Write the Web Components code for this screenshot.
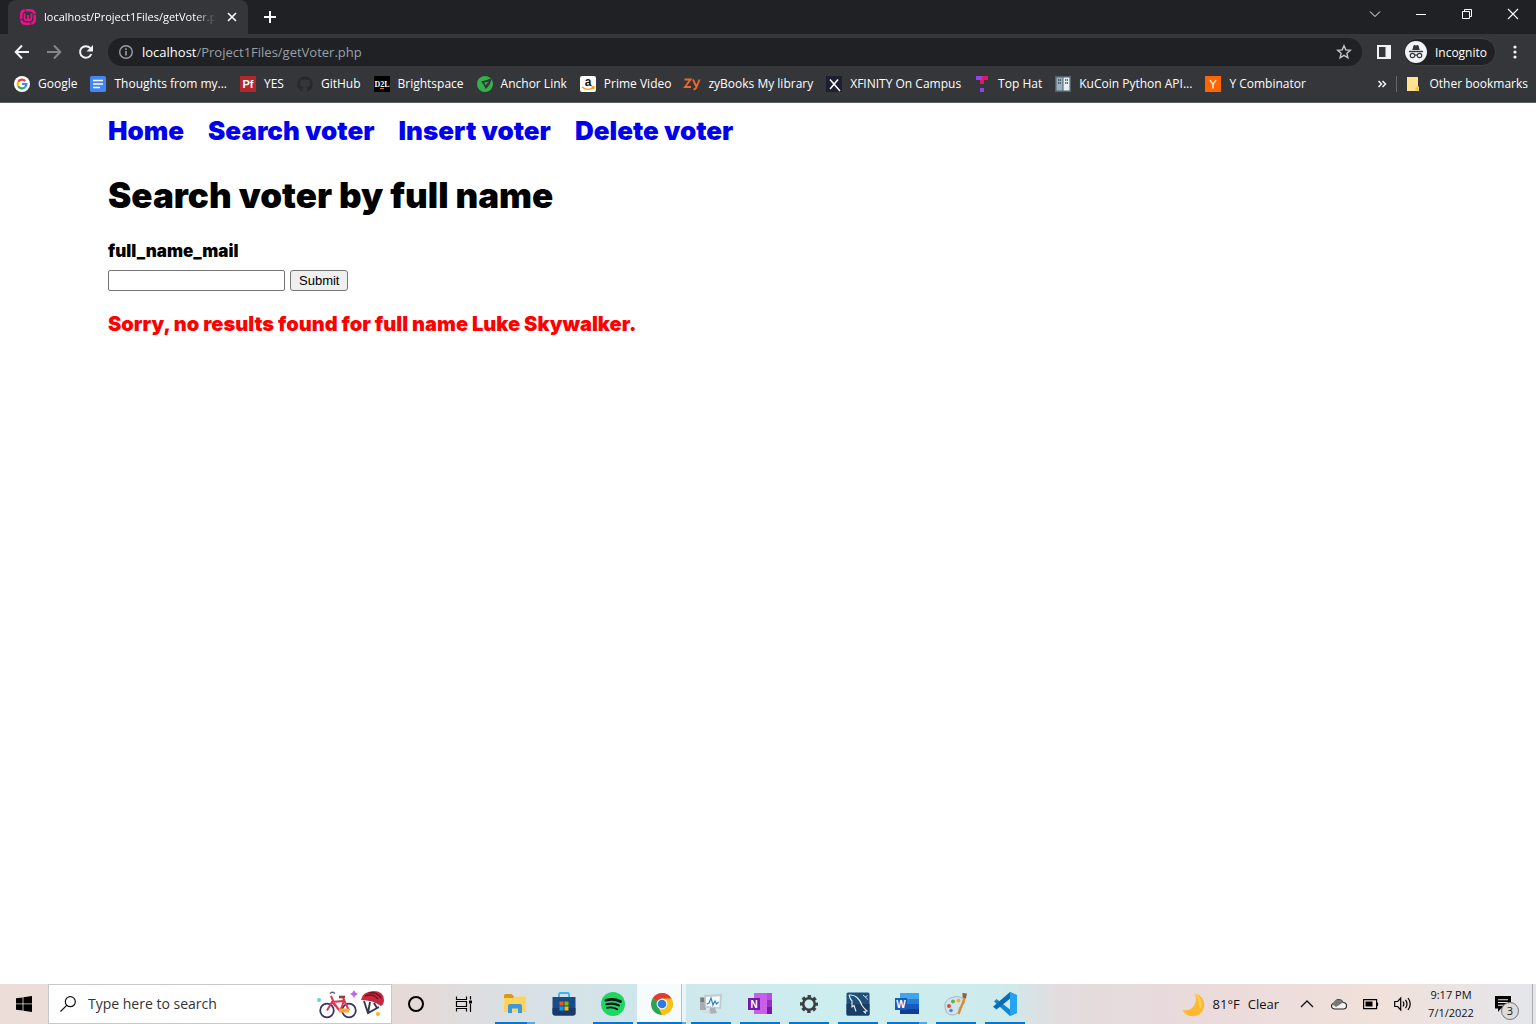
<!DOCTYPE html>
<html lang="en">
<head>
<meta charset="utf-8">
<title>localhost/Project1Files/getVoter.php</title>
<style>
  html, body { height: 100%; margin: 0; }
  body { font-family: "Open Sans", "Noto Sans", sans-serif; font-size: 12px; background: #fff; }
</style>
</head>
<body>
<browser-window>
  <tab-strip slot="tabs"></tab-strip>
  <tool-bar slot="toolbar"></tool-bar>
  <bookmarks-bar slot="bookmarks">
    <bookmark-link icon="google">Google</bookmark-link>
    <bookmark-link icon="docs">Thoughts from my...</bookmark-link>
    <bookmark-link icon="pf">YES</bookmark-link>
    <bookmark-link icon="github">GitHub</bookmark-link>
    <bookmark-link icon="d2l">Brightspace</bookmark-link>
    <bookmark-link icon="anchor">Anchor Link</bookmark-link>
    <bookmark-link icon="amazon">Prime Video</bookmark-link>
    <bookmark-link icon="zy">zyBooks My library</bookmark-link>
    <bookmark-link icon="xfinity">XFINITY On Campus</bookmark-link>
    <bookmark-link icon="tophat">Top Hat</bookmark-link>
    <bookmark-link icon="kucoin">KuCoin Python API...</bookmark-link>
    <bookmark-link icon="ycomb">Y Combinator</bookmark-link>
    <bookmark-link icon="folder" slot="end">Other bookmarks</bookmark-link>
  </bookmarks-bar>
  <voter-search-page></voter-search-page>
  <task-bar slot="taskbar">
    <task-app icon="explorer" label="File Explorer" state="stacked"></task-app>
    <task-app icon="store" label="Microsoft Store"></task-app>
    <task-app icon="spotify" label="Spotify" state="open"></task-app>
    <task-app icon="chrome" label="Google Chrome" state="active"></task-app>
    <task-app icon="monitor" label="Resource Monitor" state="open"></task-app>
    <task-app icon="onenote" label="OneNote" state="open"></task-app>
    <task-app icon="gear" label="Settings" state="open"></task-app>
    <task-app icon="mysql" label="MySQL Workbench" state="open"></task-app>
    <task-app icon="word" label="Word" state="stacked"></task-app>
    <task-app icon="paint" label="Paint" state="open"></task-app>
    <task-app icon="vscode" label="Visual Studio Code" state="open"></task-app>
  </task-bar>
</browser-window>

<script>
const LETTER = 'text-anchor="middle" font-weight="700"';
const ICONS = {
  wamp: [16, '<rect x="1.200" y="1.200" width="13.600" height="13.600" rx="4.500" fill="none" stroke="#f0108f" stroke-width="2.400" stroke-dasharray="10.500 1"/><path d="M4.500 4.500v4q0 2.800 1.800 2.800 1.700 0 1.700-2V6v3.300q0 2 1.700 2 1.800 0 1.800-2.800v-4" fill="none" stroke="#f0108f" stroke-width="1.800"/>'],
  close: [16, '<path d="M4 4l8 8M12 4l-8 8" stroke="#fff" stroke-width="1.600"/>'],
  plus: [16, '<path d="M8 2v12M2 8h12" stroke="#fff" stroke-width="2"/>'],
  chevdown: [16, '<path d="M3 5.500l5 5 5-5" fill="none" stroke="#fff"/>'],
  minimize: [16, '<path d="M3 8.500h10" stroke="#fff"/>'],
  restore: [16, '<path d="M3.500 5.500h7v7h-7zM5.500 5.500v-2h7v7h-2" fill="none" stroke="#fff"/>'],
  winclose: [16, '<path d="M3 3l10 10M13 3L3 13" stroke="#fff" stroke-width="1.100"/>'],
  back: [16, '<path d="M15 8H2M8 1.500L1.700 8 8 14.500" fill="none" stroke="#f1f3f4" stroke-width="2"/>'],
  forward: [16, '<path d="M1 8h13M8 1.500L14.300 8 8 14.500" fill="none" stroke="#85868a" stroke-width="2"/>'],
  reload: [16, '<path d="M13.300 10A5.800 5.800 0 1 1 12.300 4.200" fill="none" stroke="#f1f3f4" stroke-width="2"/><path d="M15 1v6.500H8.500z" fill="#f1f3f4"/>'],
  info: [16, '<circle cx="8" cy="8" r="6.300" fill="none" stroke="#9aa0a6" stroke-width="1.400"/><path d="M8 7v4.500M8 4.300v1.700" stroke="#9aa0a6" stroke-width="1.600"/>'],
  star: [16, '<path d="M8 1.700l1.800 4.200 4.500.4-3.400 3 1 4.500L8 11.400l-3.900 2.400 1-4.500-3.400-3 4.500-.4z" fill="none" stroke="#c4c7c9" stroke-width="1.400"/>'],
  panel: [16, '<path d="M1 1h14v14H1zM3 3v10h6.500V3z" fill="#f1f3f4" fill-rule="evenodd"/>'],
  incognito: [22, '<circle cx="11" cy="11" r="11" fill="#f1f3f4"/><path d="M7.300 9l1.200-4.600q1.200-.7 2.500 0 1.300-.7 2.500 0L14.700 9z" fill="#35363a"/><path d="M4 10.500h14" stroke="#35363a" stroke-width="1.400"/><g fill="none" stroke="#35363a" stroke-width="1.200"><circle cx="7.500" cy="14.500" r="2.200"/><circle cx="14.500" cy="14.500" r="2.200"/><path d="M9.700 14.300q1.300-.8 2.600 0"/></g>'],
  dots: [16, '<g fill="#f1f3f4"><circle cx="8" cy="3" r="1.600"/><circle cx="8" cy="8" r="1.600"/><circle cx="8" cy="13" r="1.600"/></g>'],
  more: [16, '<path d="M4.500 5l3 3-3 3M8.500 5l3 3-3 3" fill="none" stroke="#f1f3f4" stroke-width="1.500"/>'],
  google: [16, '<circle cx="8" cy="8" r="8" fill="#fff"/><g fill="none" stroke-width="2.200"><path d="M4.200 5.800A4.400 4.400 0 0 1 11.200 4.900" stroke="#ea4335"/><path d="M4.200 10.200a4.400 4.400 0 0 1 0-4.400" stroke="#fbbc05"/><path d="M11 11.200A4.400 4.400 0 0 1 4.200 10.200" stroke="#34a853"/><path d="M8 8h4.400a4.400 4.400 0 0 1-1.400 3.200" stroke="#4285f4"/></g>'],
  docs: [16, '<rect width="16" height="16" rx="1.500" fill="#4285f4"/><path d="M3 4.500h10M3 8h10M3 11.500h7" stroke="#fff" stroke-width="1.600"/>'],
  pf: [16, `<rect width="16" height="16" fill="#b3282d"/><text x="8" y="12" font-size="11" fill="#fff" ${LETTER}>Pf</text>`],
  github: [16, '<path d="M8 .2a8 8 0 0 0-2.500 15.500c.4 0 .5-.2.500-.4v-1.500c-2.200.5-2.700-1-2.700-1-.4-.9-.9-1.200-.9-1.200-.7-.5.100-.5.100-.5.800.1 1.200.8 1.200.8.700 1.300 1.900.9 2.400.7 0-.5.300-.9.500-1.100-1.800-.2-3.600-.9-3.600-4 0-.9.300-1.600.8-2.100-.1-.2-.4-1 .1-2.100 0 0 .7-.2 2.200.8a7.600 7.600 0 0 1 4 0c1.500-1 2.200-.8 2.200-.8.400 1.100.2 1.900.1 2.100.5.600.8 1.300.8 2.100 0 3.100-1.900 3.800-3.700 4 .3.200.6.700.6 1.500v2.200c0 .2.100.5.600.4A8 8 0 0 0 8 .2z" fill="#24292e"/>'],
  d2l: [16, `<rect width="16" height="16" fill="#000"/><text x="8" y="11" font-family="Liberation Serif, serif" font-size="8" fill="#fff" ${LETTER}>D2L</text><path d="M6 12.500h4" stroke="#e87511"/>`],
  anchor: [16, '<circle cx="8" cy="8" r="8" fill="#34b24a"/><path d="M4 5.500Q9 5 14.500 2 14 9 8.500 13 7.500 9 4 5.500z" fill="#35363a"/><path d="M7.200 6.600l1.400 2.600L12 5.400q-2.500 1-4.800 1.200z" fill="#34b24a"/>'],
  amazon: [16, `<rect width="16" height="16" rx="2" fill="#fff"/><text x="8" y="10" font-size="12" fill="#111" ${LETTER}>a</text><path d="M2 11q6 4.500 11.500.5M11.500 11l2.500-.3-.6 2.500" fill="none" stroke="#f90" stroke-width="1.300"/>`],
  zy: [16, '<path d="M.5 3.500h6l-5.500 7.500h6M9 3.500l3 6.500M15.500 3.500l-3.500 8.500q-.7 1.500-2.500 1.200" fill="none" stroke="#e8692c" stroke-width="1.900"/>'],
  xfinity: [16, '<rect width="16" height="16" fill="#1b1f2e"/><path d="M4 3.500l10 11.500M12 3.500l-8 9.500" stroke="#fff" stroke-width="1.500"/>'],
  tophat: [16, '<path d="M2 0h6v4H2z" fill="#8f44f0"/><path d="M8 0h6v4H8z" fill="#e0186c"/><path d="M6 4h4v4H6z" fill="#e0186c"/><path d="M6 12h4v4H6z" fill="#8f44f0"/>'],
  kucoin: [16, '<path d="M0 0h16v16H0z" fill="#4f6270"/><path d="M1.500 1.500h6v13h-6z" fill="#9bb0bd"/><path d="M8.500 1.500h6v13h-6z" fill="#e8eef2"/><path d="M3 4h3M3 7h3M10 4h3M10 7h3" stroke="#3a4953" stroke-width="1.500" stroke-dasharray="1.200 .6"/>'],
  ycomb: [16, '<path d="M0 0h16v16H0z" fill="#f60"/><path d="M5 4l3 4.500L11 4M8 8v4.500" fill="none" stroke="#fff" stroke-width="1.300"/>'],
  folder: [16, '<path d="M2 1h11v9.500h1V15H2z" fill="#ffe391"/><path d="M10.500 15v-3l2.500-2v1.500h1V15z" fill="#f3c83c"/>'],
  windows: [16, '<path d="M0 2.300L6.600 1.400v6.100H0zM7.400 1.300L16 0v7.500H7.400zM0 8.300h6.600v6.300L0 13.700zM7.400 8.300H16V16l-8.600-1.300z" fill="#000"/>'],
  search: [16, '<circle cx="10.300" cy="5.700" r="5" fill="none" stroke="#111" stroke-width="1.200"/><path d="M6.700 9.300L.5 15.500" stroke="#111" stroke-width="1.200"/>'],
  cortana: [16, '<circle cx="8" cy="8" r="7" fill="none" stroke="#000" stroke-width="2"/>'],
  taskview: [16, '<path d="M.5.500v3h10v-3M.5 15.500v-3h10v3M.5 5.500h10v5H.5zM14.500 0v3.500M14.500 8v8" fill="none" stroke="#000" stroke-width="1.200"/><path d="M13 4.500h3v3h-3z"/>'],
  explorer: [24, '<path d="M1 3.500q0-1.500 1.500-1.500h6L11 4.500V9H1z" fill="#d99a1c"/><path d="M1 6h9l2-1.500h10q1 0 1 1V20H1z" fill="#ffd35c"/><path d="M5 21v-7q0-2 2-2h10q2 0 2 2v7h-4v-4.500H9V21z" fill="#3b98d9"/>'],
  store: [24, '<path d="M7 6V2.500Q7 1 8.500 1h7Q17 1 17 2.500V6" fill="none" stroke="#36b5ee" stroke-width="1.800"/><path d="M.5 5h23v16q0 2.500-2.500 2.500H3Q.5 23.500.5 21z" fill="#1a4b86"/><path d="M.5 16h23v5q0 2.500-2.500 2.500H3Q.5 23.500.5 21z" fill="#183a6b"/><path d="M7.500 9.500h4v4h-4z" fill="#f25022"/><path d="M12.500 9.500h4v4h-4z" fill="#7fba00"/><path d="M7.500 14.500h4v4h-4z" fill="#00a4ef"/><path d="M12.500 14.500h4v4h-4z" fill="#ffb900"/>'],
  spotify: [24, '<circle cx="12" cy="12" r="12" fill="#1ed760"/><g fill="none" stroke="#10131a" stroke-linecap="round"><path d="M4.800 8.200q8-2.200 14.700 1.300" stroke-width="2.700"/><path d="M5.500 12.200q7-1.800 12.500 1.200" stroke-width="2.200"/><path d="M6 15.800q5.500-1.200 10.300 1.400" stroke-width="1.800"/></g>'],
  chrome: [24, '<path d="M12 12L2.500 6.500A11 11 0 0 1 21.600 6.500z" fill="#e33b2e"/><path d="M12 12L2.500 6.500A11 11 0 0 0 12 23z" fill="#2da44e"/><path d="M12 12h-1l1 11A11 11 0 0 0 21.600 6.500H12z" fill="#fbc116"/><path d="M2.500 6.500L7.300 14.500 12 12z" fill="#2da44e"/><path d="M16.700 14.500L12 23l-3-6z" fill="#fbc116"/><circle cx="12" cy="12" r="5.400" fill="#fff"/><circle cx="12" cy="12" r="4.300" fill="#2f78ec"/>'],
  monitor: [24, '<path d="M1 5h6v13H1z" fill="#a5adb3"/><path d="M1.500 7h4M1.500 9h4" stroke="#3f4b52"/><path d="M5 3l18-1-1 15-16-1.500z" fill="#c4cbd0"/><path d="M7 5l14-.8-.8 11L7.500 14z" fill="#f5fbff"/><path d="M8 12l2-1 2-5 2 7 2-4 1.500 3 2-2" fill="none" stroke="#2b83c6" stroke-width="1.200"/><path d="M11 16h5l2 5-8 1z" fill="#aab2b8"/><path d="M3 18l8 1 1 3-9-2z" fill="#d5dade"/>'],
  onenote: [24, `<path d="M6 1h18v21H6z" fill="#c95fe8"/><path d="M19 1h5v7h-5z" fill="#b54fdf"/><path d="M19 8h5v7h-5z" fill="#9332bf"/><path d="M19 15h5v7h-5z" fill="#7719aa"/><path d="M0 6h12v12H0z" fill="#7719aa"/><text x="6" y="15.500" font-size="10" fill="#fff" ${LETTER}>N</text>`],
  gear: [24, '<circle cx="12" cy="12" r="5.800" fill="none" stroke="#3a3f42" stroke-width="2.600"/><circle cx="12" cy="12" r="7.500" fill="none" stroke="#3a3f42" stroke-width="3" stroke-dasharray="3.300 2.590" stroke-dashoffset="1.650"/>'],
  mysql: [24, '<rect x=".5" y=".5" width="23" height="23" rx="1.500" fill="#1f4f7c"/><path d="M.5 12h23v10q0 1.500-1.500 1.500H2Q.5 23.500.5 22z" fill="#1a3e63"/><path d="M3 3q5-.5 8 2.500 3.500 3 5 8 2 3 5 5.500l-3 .5 2 2M3 3q1 4 3 6v6l2-1.500 2 6" fill="none" stroke="#e6f0f7" stroke-width="1.100"/><path d="M17 3l5 4.500M19 5.500l2.500-2" stroke="#cfdde8"/>'],
  word: [24, `<path d="M5 1h19v6H5z" fill="#41a5ee"/><path d="M5 7h19v5H5z" fill="#2b7cd3"/><path d="M5 12h19v5H5z" fill="#185abd"/><path d="M5 17h19v5H5z" fill="#103f91"/><path d="M0 6h12v12H0z" fill="#185abd"/><text x="6" y="15.500" font-size="10" fill="#fff" ${LETTER}>W</text>`],
  paint: [24, '<path d="M1 15Q0 8 8 5.500q9-2.500 12 2.500 2 4-3 6-2.500 1-2 4-1 5-7 5T1 15z" fill="#d4e4ee" stroke="#8fa9ba" stroke-width=".8"/><circle cx="5" cy="14" r="2" fill="#e04a33"/><circle cx="9" cy="9.500" r="2" fill="#59b24b"/><circle cx="14.500" cy="8.500" r="2" fill="#f0b429"/><circle cx="7" cy="18.500" r="1.800" fill="#3d8fd6"/><path d="M21 5l-6.500 17" stroke="#d98a2b" stroke-width="2.200"/><path d="M18.500 1l4.500.5-1 5-3.500-1z" fill="#94603a"/>'],
  vscode: [24, '<path d="M17 0l6.500 3v18L17 24 1 9.500 3.500 7 17 17.500z" fill="#1187d4"/><path d="M17 0L0 14.700 3.500 17.500 17 6.800z" fill="#0a6cb8"/><path d="M17 0l7 3v18l-7 3z" fill="#25a4ee"/>'],
  moon: [24, '<path d="M13.500 1.500A11.500 11.500 0 1 1 1.500 18Q10 19.500 13.500 13q3-6 0-11.500z" fill="#ffb92e"/><path d="M13.500 1.500a11.500 11.500 0 0 1 5 17Q19 8 13.500 1.500z" fill="#ffd35a"/>'],
  chevup: [16, '<path d="M2 11l6-6 6 6" fill="none" stroke="#111" stroke-width="1.300"/>'],
  cloud: [16, '<path d="M3.500 13q-3-.5-3-3t3-3Q5 3 8.500 3.500q2.500.3 3.500 3 3.500 0 3.500 3.200T12.500 13z" fill="#f6f2f0" stroke="#222" stroke-width="1.100"/><path d="M1.500 8.500Q3 3.500 8 3.500q3 0 4 3L5 11z" fill="#777"/>'],
  battery: [16, '<path d="M.6 3.600h13v9H.6zM14.500 6.500v3.500" fill="none" stroke="#000" stroke-width="1.200"/><path d="M2.500 5.500h7v5h-7z"/>'],
  speaker: [18, '<path d="M.7 6.500h3l3-3.500v12l-3-3.500h-3zM9 6.500q1.800 2.500 0 5M11.500 4.800q3 4.200 0 8.400M14 3q4.500 6 0 12" fill="none" stroke="#000" stroke-width="1.200"/>'],
  bubble: [16, '<path d="M0 0h16v12.500H6L3 16v-3.500H0z"/><path d="M3 3.700h10M3 6.500h10M3 9.300h7" stroke="#ebe4e2" stroke-width="1.100"/>'],
  cycling: [70, '<g fill="none"><circle cx="10" cy="20.500" r="6.800" stroke="#38336b" stroke-width="1.800"/><circle cx="32" cy="20.500" r="6.800" stroke="#38336b" stroke-width="1.800"/><path d="M10 20.500l5-8.500 12-1-4 10-8-9M14 6l3 7 6 8M26 8l6 12.500" stroke="#e0344f" stroke-width="2"/><path d="M22 20.500h10" stroke="#fba92e" stroke-width="4"/><path d="M18 3.500q-3-2.500-5 0" stroke="#5f6a80" stroke-width="1.600"/><path d="M22 7h6" stroke="#8a4634" stroke-width="2.600"/></g><circle cx="2" cy="10" r="2" fill="#61d3e3"/><path d="M37 0l1.400 2.600L41 4l-2.600 1.400L37 8l-1.400-2.600L33 4l2.600-1.400z" fill="#c164ee"/><path d="M44 10q1-8 12-9 11 0 11 9 0 4-3 6-8-6-20-6z" fill="#c8283f"/><path d="M48 6q8-3 13 3M52 3q8-1 12 5" stroke="#6d1325" stroke-width="1.500" fill="none"/><path d="M47 11l4 12 11-6M53 12l-2 11M57 13l3 5" stroke="#333a4e" stroke-width="1.900" fill="none"/><circle cx="61" cy="24" r="2" fill="#fbb120"/>', 28],
};

const define = (name, html, setup) => {
  const template = document.createElement('template');
  template.innerHTML = html;
  customElements.define(name, class extends HTMLElement {
    constructor() {
      super();
      this.attachShadow({ mode: 'open' }).append(template.content.cloneNode(true));
    }
    connectedCallback() { if (setup) setup(this, this.shadowRoot); }
  });
};

/* An inline drawing picked by name; its box takes the size of the drawing. */
define('ui-icon', '<style>:host{display:inline-flex;flex:none}svg{display:block;overflow:visible;font-family:"Liberation Sans",sans-serif}</style><span></span>', (el, root) => {
  const [w, body, h = w] = ICONS[el.getAttribute('name')];
  root.querySelector('span').innerHTML =
    `<svg aria-hidden="true" viewBox="0 0 ${w} ${h}" width="${w}" height="${h}">${body}</svg>`;
});

define('browser-window', `
  <style>
    :host { display: flex; flex-direction: column; min-height: 100vh; }
    main { flex: 1; background: #fff; }
  </style>
  <slot name="tabs"></slot><slot name="toolbar"></slot><slot name="bookmarks"></slot>
  <main><slot></slot></main>
  <slot name="taskbar"></slot>`);

define('tab-strip', `
  <style>
    :host { display: flex; height: 34px; padding-left: 8px; background: #202124; color: #fff; }
    button { all: unset; display: flex; align-items: center; justify-content: center; }
    .tab { display: flex; align-items: center; gap: 8px; width: 240px; padding: 0 8px 0 12px; box-sizing: border-box;
           background: #35363a; border-radius: 8px 8px 0 0; }
    .title { flex: 1; overflow: hidden; white-space: nowrap; font-size: 11px; line-height: 16px;
             mask-image: linear-gradient(90deg, #000 88%, transparent); }
    .tab button { width: 16px; height: 16px; }
    .new { width: 44px; }
    .controls { display: flex; margin-left: auto; height: 28px; }
    .controls button { width: 46px; }
  </style>
  <div class="tab"><ui-icon name="wamp"></ui-icon><span class="title">localhost/Project1Files/getVoter.p</span><button aria-label="Close tab"><ui-icon name="close"></ui-icon></button></div>
  <button class="new" aria-label="New tab"><ui-icon name="plus"></ui-icon></button>
  <div class="controls">
    <button aria-label="Search tabs"><ui-icon name="chevdown"></ui-icon></button>
    <button aria-label="Minimize"><ui-icon name="minimize"></ui-icon></button>
    <button aria-label="Restore"><ui-icon name="restore"></ui-icon></button>
    <button aria-label="Close"><ui-icon name="winclose"></ui-icon></button>
  </div>`);

define('tool-bar', `
  <style>
    :host { display: flex; align-items: center; height: 36px; padding: 0 8px 0 6px; background: #35363a; color: #fff; }
    button { all: unset; display: flex; align-items: center; justify-content: center; width: 32px; height: 28px; }
    .omnibox { flex: 1; display: flex; align-items: center; height: 28px; margin: 0 6px; padding: 0 10px; gap: 8px;
               border-radius: 14px; background: #202124; }
    .url { flex: 1; font-size: 13px; line-height: 20px; color: #9aa0a6; }
    .url b { font-weight: 400; color: #fff; }
    .omnibox button { width: 16px; }
    .profile { width: auto; gap: 8px; height: 26px; margin: 0 6px 0 3px; padding: 0 8px 0 1px; border-radius: 14px;
               background: #202124; border: 1px solid #3f4044; }
    .menu { width: 26px; }
  </style>
  <button aria-label="Back"><ui-icon name="back"></ui-icon></button>
  <button aria-label="Forward"><ui-icon name="forward"></ui-icon></button>
  <button aria-label="Reload"><ui-icon name="reload"></ui-icon></button>
  <div class="omnibox"><ui-icon name="info"></ui-icon><span class="url"><b>localhost</b>/Project1Files/getVoter.php</span><button aria-label="Bookmark this tab"><ui-icon name="star"></ui-icon></button></div>
  <button aria-label="Side panel"><ui-icon name="panel"></ui-icon></button>
  <button class="profile"><ui-icon name="incognito"></ui-icon>Incognito</button>
  <button class="menu" aria-label="Menu"><ui-icon name="dots"></ui-icon></button>`);

define('bookmarks-bar', `
  <style>
    :host { display: flex; align-items: center; box-sizing: border-box; height: 33px; padding: 0 8px 4px 14px;
            background: #35363a; border-bottom: 1px solid #5b5c60; color: #fff; }
    nav { flex: 1; display: flex; gap: 13px; }
    button { all: unset; display: flex; }
    .end { display: flex; align-items: center; gap: 6px; }
    .rule { width: 1px; height: 16px; margin-right: 2px; background: #66676b; }
  </style>
  <nav><slot></slot></nav>
  <div class="end"><button aria-label="More bookmarks"><ui-icon name="more"></ui-icon></button><span class="rule"></span><slot name="end"></slot></div>`);

define('bookmark-link', `
  <style>
    :host { display: block; }
    a { display: flex; align-items: center; gap: 8px; color: inherit; text-decoration: none; white-space: nowrap; line-height: 16px; }
  </style>
  <a href="#"><slot></slot></a>`, (el, root) => {
  const icon = document.createElement('ui-icon');
  icon.setAttribute('name', el.getAttribute('icon'));
  root.querySelector('a').prepend(icon);
});

define('voter-search-page', `
  <style>
    :host { display: block; padding: 13px 108px; color: #000; font-family: Inter, "Liberation Sans", sans-serif; font-weight: 900; }
    nav { display: flex; gap: 24px; font-size: 26px; line-height: 30px; }
    a { color: #00e; text-decoration: none; }
    h1 { margin: 26px 0 21px; font-size: 35px; line-height: 46px; font-weight: inherit; }
    label { display: block; font-size: 17px; line-height: 24px; }
    .row { display: flex; gap: 5px; margin-top: 7px; }
    input { box-sizing: border-box; width: 177px; height: 21px; border: 1px solid #767676; border-radius: 2px; }
    button { box-sizing: border-box; height: 21px; padding: 0 8px; border: 1px solid #767676; border-radius: 3px; background: #efefef; color: #000;
             font: 13px/18px "Liberation Sans", sans-serif; }
    p { margin: 20px 0; font-size: 20px; line-height: 26px; color: #f00; }
  </style>
  <nav><a href="#">Home</a><a href="#">Search voter</a><a href="#">Insert voter</a><a href="#">Delete voter</a></nav>
  <h1>Search voter by full name</h1>
  <form>
    <label for="name">full_name_mail</label>
    <div class="row"><input id="name" type="text"><button type="submit">Submit</button></div>
  </form>
  <p>Sorry, no results found for full name Luke Skywalker.</p>`);

define('task-bar', `
  <style>
    :host { display: flex; height: 40px; color: #111;
            background: linear-gradient(90deg, #ecddd7 0, #e5dad7 27%, #dcdfe2 32%, #cfe6ec 42%, #cdeeef 55%, #cdebed 65%, #e3dcde 69%, #eadadc 78%, #f0e1da 90%, #e4e6ec 100%); }
    button { all: unset; display: flex; align-items: center; justify-content: center; width: 48px; }
    .search { display: flex; align-items: center; gap: 12px; width: 344px; box-sizing: border-box; padding: 0 4px 0 11px;
              background: #fff; border: 1px solid #c8c8c8; }
    .search input { all: unset; flex: 1; min-width: 0; font-size: 14px; line-height: 20px; color: #333; }
    .search input::placeholder { color: #333; opacity: 1; }
    .apps { display: flex; margin-left: 2px; }
    .tray { display: flex; align-items: center; margin-left: auto; }
    .weather { width: auto; gap: 8px; font-size: 13px; margin-right: 12px; }
    .small { width: 32px; }
    .clock { width: 64px; text-align: center; line-height: 18px; font-size: 11px; }
    .notices { position: relative; width: 40px; height: 40px; }
    .badge { position: absolute; left: 18px; top: 18px; width: 16px; height: 16px; border: 1px solid #777; border-radius: 50%;
             background: #dedbda; font-size: 11px; line-height: 16px; text-align: center; }
    .edge { width: 4px; height: 40px; margin-left: 9px; box-sizing: border-box; border-left: 1px solid #a9a9ae; }
  </style>
  <button aria-label="Start"><ui-icon name="windows"></ui-icon></button>
  <div class="search"><ui-icon name="search"></ui-icon><input type="text" aria-label="Search" placeholder="Type here to search"><ui-icon name="cycling"></ui-icon></div>
  <button aria-label="Cortana"><ui-icon name="cortana"></ui-icon></button>
  <button aria-label="Task View"><ui-icon name="taskview"></ui-icon></button>
  <div class="apps"><slot></slot></div>
  <div class="tray">
    <button class="weather"><ui-icon name="moon"></ui-icon><span>81°F</span><span>Clear</span></button>
    <button class="small" aria-label="Hidden icons"><ui-icon name="chevup"></ui-icon></button>
    <button class="small" aria-label="OneDrive"><ui-icon name="cloud"></ui-icon></button>
    <button class="small" aria-label="Battery"><ui-icon name="battery"></ui-icon></button>
    <button class="small" aria-label="Volume"><ui-icon name="speaker"></ui-icon></button>
    <time class="clock" datetime="2022-07-01T21:17">9:17 PM<br>7/1/2022</time>
    <button class="notices" aria-label="Notifications"><ui-icon name="bubble"></ui-icon><span class="badge">3</span></button>
    <span class="edge"></span>
  </div>`);

define('task-app', `
  <style>
    :host { display: block; width: 49px; }
    button { all: unset; display: flex; flex-direction: column; align-items: center; width: 49px; height: 40px; padding-top: 8px; box-sizing: border-box; }
    .line { width: 40px; height: 2px; margin-top: auto; }
    :host([state="open"]) .line { background: #0078d7; }
    :host([state="stacked"]) .line { background: linear-gradient(90deg, #0078d7 32px, #5ba7e3 32px); }
    :host([state="active"]) { background: linear-gradient(90deg, #f6fbfc 44px, #a9c9d2 44px, #a9c9d2 45px, #eaf5f8 45px); }
    :host([state="active"]) .line { width: 49px; background: linear-gradient(90deg, #0078d7 45px, #5ba7e3 45px); }
  </style>
  <button><span class="icon"></span><span class="line"></span></button>`, (el, root) => {
  const icon = document.createElement('ui-icon');
  icon.setAttribute('name', el.getAttribute('icon'));
  root.querySelector('.icon').replaceChildren(icon);
  root.querySelector('button').setAttribute('aria-label', el.getAttribute('label'));
});
</script>
</body>
</html>
